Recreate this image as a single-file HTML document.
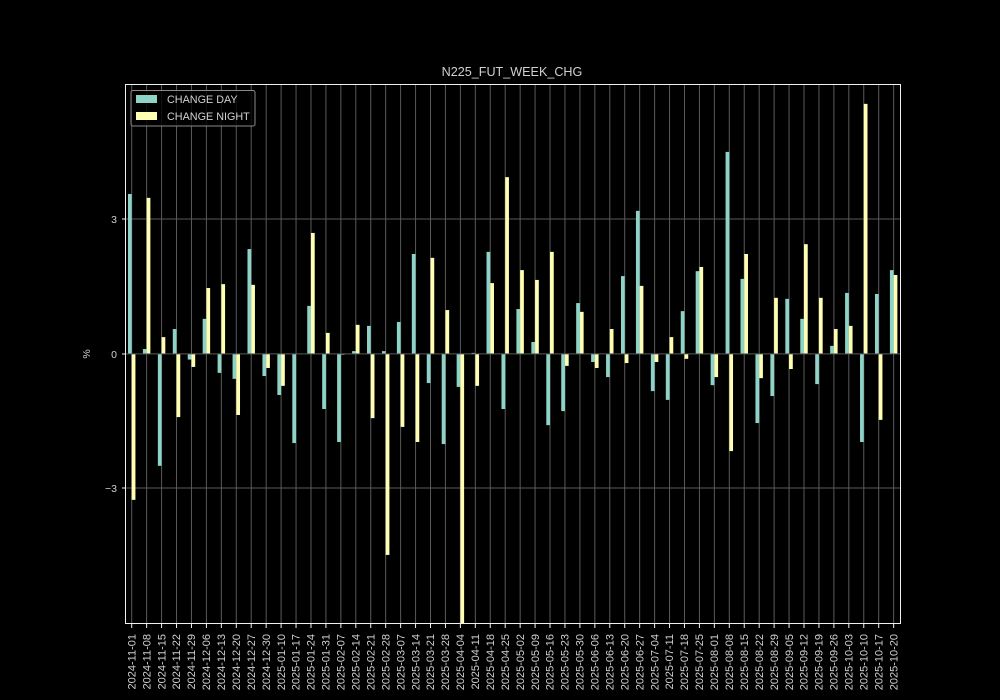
<!DOCTYPE html>
<html><head><meta charset="utf-8"><style>
html,body{margin:0;padding:0;background:#000;}
svg{display:block;}
text{font-family:"Liberation Sans","DejaVu Sans",sans-serif;fill:#d0d0d0;}
</style></head><body>
<svg id="s" width="1000" height="700" viewBox="0 0 1000 700" xmlns="http://www.w3.org/2000/svg">
<rect width="1000" height="700" fill="#000"/>
<g id="grid" stroke="#5a5a5a" stroke-width="1"></g>
<g id="bars"></g>
<line x1="125" y1="353.9" x2="900" y2="353.9" stroke="#5a5a5a"/>
<rect x="125.5" y="84.5" width="775" height="539" fill="none" stroke="#f0f0f0" stroke-width="1"/>
<g id="ticks" stroke="#f0f0f0"></g>
<text x="512" y="76" font-size="12.6" text-anchor="middle">N225_FUT_WEEK_CHG</text>
<text x="117" y="223" font-size="10.5" text-anchor="end">3</text>
<text x="117" y="358" font-size="10.5" text-anchor="end">0</text>
<text x="117" y="492" font-size="10.5" text-anchor="end">−3</text>
<line x1="122" y1="219" x2="125" y2="219" stroke="#f0f0f0"/>
<line x1="122" y1="354" x2="125" y2="354" stroke="#f0f0f0"/>
<line x1="122" y1="488" x2="125" y2="488" stroke="#f0f0f0"/>
<text transform="translate(90,354) rotate(-90)" font-size="10.5" text-anchor="middle">%</text>
<rect x="131" y="90.5" width="124" height="35.5" rx="2" fill="#000" fill-opacity="0.8" stroke="#8a8a8a"/>
<rect x="136" y="95" width="21" height="8" fill="#8dd3c7"/>
<rect x="136" y="112" width="21" height="8" fill="#ffffb3"/>
<text x="167" y="103" font-size="10.8">CHANGE DAY</text>
<text x="167" y="120" font-size="10.8">CHANGE NIGHT</text>
<g font-size="11" text-anchor="end">
<text transform="translate(135.4,634) rotate(-90)">2024-11-01</text>
<text transform="translate(150.3,634) rotate(-90)">2024-11-08</text>
<text transform="translate(165.3,634) rotate(-90)">2024-11-15</text>
<text transform="translate(180.2,634) rotate(-90)">2024-11-22</text>
<text transform="translate(195.2,634) rotate(-90)">2024-11-29</text>
<text transform="translate(210.1,634) rotate(-90)">2024-12-06</text>
<text transform="translate(225.0,634) rotate(-90)">2024-12-13</text>
<text transform="translate(240.0,634) rotate(-90)">2024-12-20</text>
<text transform="translate(254.9,634) rotate(-90)">2024-12-27</text>
<text transform="translate(269.9,634) rotate(-90)">2024-12-30</text>
<text transform="translate(284.8,634) rotate(-90)">2025-01-10</text>
<text transform="translate(299.7,634) rotate(-90)">2025-01-17</text>
<text transform="translate(314.7,634) rotate(-90)">2025-01-24</text>
<text transform="translate(329.6,634) rotate(-90)">2025-01-31</text>
<text transform="translate(344.6,634) rotate(-90)">2025-02-07</text>
<text transform="translate(359.5,634) rotate(-90)">2025-02-14</text>
<text transform="translate(374.4,634) rotate(-90)">2025-02-21</text>
<text transform="translate(389.4,634) rotate(-90)">2025-02-28</text>
<text transform="translate(404.3,634) rotate(-90)">2025-03-07</text>
<text transform="translate(419.3,634) rotate(-90)">2025-03-14</text>
<text transform="translate(434.2,634) rotate(-90)">2025-03-21</text>
<text transform="translate(449.1,634) rotate(-90)">2025-03-28</text>
<text transform="translate(464.1,634) rotate(-90)">2025-04-04</text>
<text transform="translate(479.0,634) rotate(-90)">2025-04-11</text>
<text transform="translate(494.0,634) rotate(-90)">2025-04-18</text>
<text transform="translate(508.9,634) rotate(-90)">2025-04-25</text>
<text transform="translate(523.8,634) rotate(-90)">2025-05-02</text>
<text transform="translate(538.8,634) rotate(-90)">2025-05-09</text>
<text transform="translate(553.7,634) rotate(-90)">2025-05-16</text>
<text transform="translate(568.7,634) rotate(-90)">2025-05-23</text>
<text transform="translate(583.6,634) rotate(-90)">2025-05-30</text>
<text transform="translate(598.5,634) rotate(-90)">2025-06-06</text>
<text transform="translate(613.5,634) rotate(-90)">2025-06-13</text>
<text transform="translate(628.4,634) rotate(-90)">2025-06-20</text>
<text transform="translate(643.4,634) rotate(-90)">2025-06-27</text>
<text transform="translate(658.3,634) rotate(-90)">2025-07-04</text>
<text transform="translate(673.2,634) rotate(-90)">2025-07-11</text>
<text transform="translate(688.2,634) rotate(-90)">2025-07-18</text>
<text transform="translate(703.1,634) rotate(-90)">2025-07-25</text>
<text transform="translate(718.1,634) rotate(-90)">2025-08-01</text>
<text transform="translate(733.0,634) rotate(-90)">2025-08-08</text>
<text transform="translate(747.9,634) rotate(-90)">2025-08-15</text>
<text transform="translate(762.9,634) rotate(-90)">2025-08-22</text>
<text transform="translate(777.8,634) rotate(-90)">2025-08-29</text>
<text transform="translate(792.8,634) rotate(-90)">2025-09-05</text>
<text transform="translate(807.7,634) rotate(-90)">2025-09-12</text>
<text transform="translate(822.6,634) rotate(-90)">2025-09-19</text>
<text transform="translate(837.6,634) rotate(-90)">2025-09-26</text>
<text transform="translate(852.5,634) rotate(-90)">2025-10-03</text>
<text transform="translate(867.5,634) rotate(-90)">2025-10-10</text>
<text transform="translate(882.4,634) rotate(-90)">2025-10-17</text>
<text transform="translate(897.3,634) rotate(-90)">2025-10-20</text>
</g>
</svg>
<script>
var d=[[325,1197],[767,336],[1100,733],[710,961],[797,818],[681,593],[835,582],[852,955],[482,584],[844,821],[898,872],[1035,781],[644,436],
[938,721],[1032,783],[773,698],[701,964],[773,1354],[690,989],[496,1032],[864,507],[1038,656],[875,1550],[778,872],[490,579],[938,277],
[653,542],[747,570],[984,490],[944,815],[636,661],[804,821],[847,710],[559,807],[373,587],[887,804],[912,733],[659,795],[545,533],
[870,847],[205,1058],[567,496],[978,850],[901,621],[624,824],[681,468],[867,621],[758,710],[607,701],[1032,68],[610,969],[542,556]];
var NS="http://www.w3.org/2000/svg";
function el(p,t,a){var e=document.createElementNS(NS,t);for(var k in a)e.setAttribute(k,a[k]);document.getElementById(p).appendChild(e);}
var z=353.9,w=3.73;
for(var i=0;i<52;i++){
 var c=131.7+14.94*i;
 el("grid","line",{x1:c,y1:85,x2:c,y2:623});
 el("ticks","line",{x1:c,y1:624,x2:c,y2:628});
 var v=[80+d[i][0]/2.851,80+d[i][1]/2.851];
 var cols=["#8dd3c7","#ffffb3"];
 for(var j=0;j<2;j++){var y=Math.min(v[j],z),h=Math.abs(v[j]-z);if(h<0.3)continue;
  el("bars","rect",{x:c-w+j*w,y:y,width:w,height:h,fill:cols[j]});}
}
el("grid","line",{x1:125,y1:219,x2:900,y2:219});
el("grid","line",{x1:125,y1:488,x2:900,y2:488});
</script>
</body></html>
